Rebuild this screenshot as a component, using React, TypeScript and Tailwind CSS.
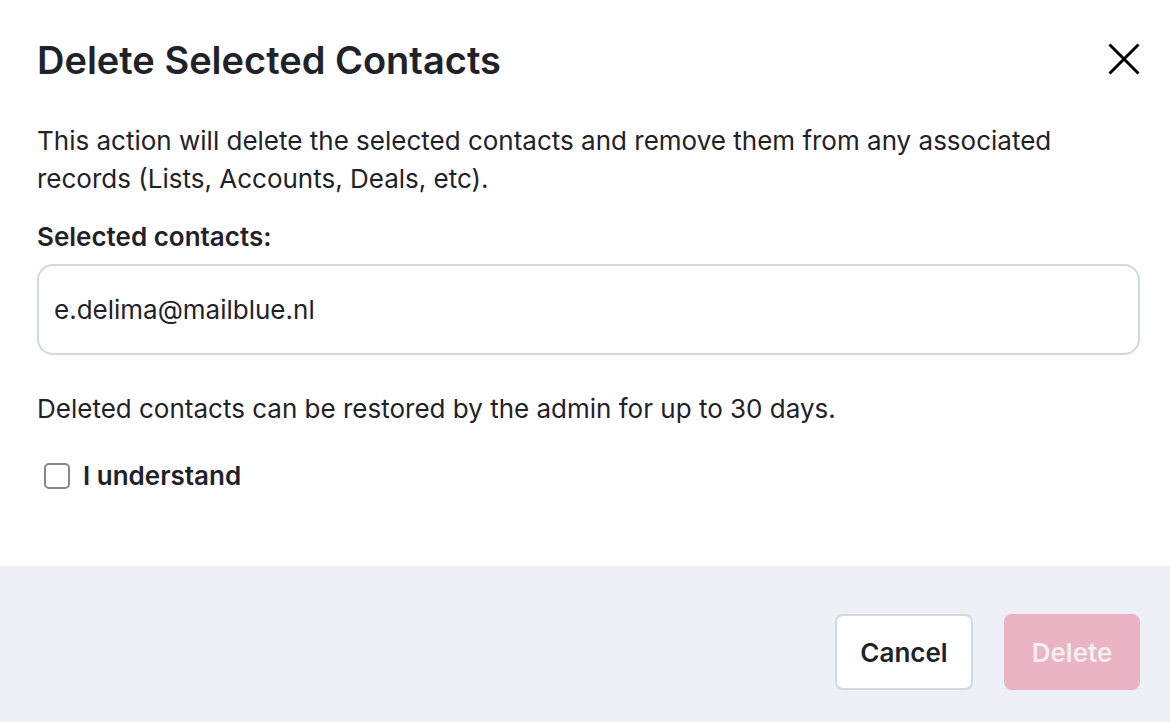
export default function App() {
  return (
    <div
      className="flex h-[722px] w-[1170px] flex-col bg-white text-[#1f2229]"
      style={{ fontFamily: "Inter, 'Noto Sans', sans-serif" }}
    >
      {/* Body */}
      <div className="flex flex-1 flex-col pl-[37px] pr-[30px] pt-[33px]">
        <div className="flex items-start justify-between">
          <h1 className="text-[38px] font-semibold leading-[54px]">Delete Selected Contacts</h1>
          <button className="mt-[10px] text-black">
            <svg width="32" height="32" viewBox="0 0 32 32" fill="none" stroke="currentColor" strokeWidth={3}>
              <path d="M1.5 1.5L30.5 30.5M30.5 1.5L1.5 30.5" />
            </svg>
          </button>
        </div>

        <p className="mt-[35px] text-[26px] leading-[38px]">
          This action will delete the selected contacts and remove them from any associated
          <br />
          records (Lists, Accounts, Deals, etc).
        </p>

        <div className="mt-[20px] text-[26px] font-semibold leading-[38px]">Selected contacts:</div>

        <div className="mt-[8px] flex h-[91px] items-center rounded-[16px] border-2 border-[#d3d6e3] px-[15px] text-[26px]">
          e.delima@mailblue.nl
        </div>

        <p className="mt-[35px] text-[26px] leading-[38px]">
          Deleted contacts can be restored by the admin for up to 30 days.
        </p>

        <label className="mt-[29px] flex items-center gap-[13px] pl-[7px]">
          <span className="h-[26px] w-[26px] rounded-[5px] border-2 border-[#85888f] bg-white" />
          <span className="text-[26px] font-semibold leading-[38px]">I understand</span>
        </label>
      </div>

      {/* Footer */}
      <div className="flex h-[156px] items-start justify-end gap-[31px] bg-[#edf0f7] px-[30px] pt-[48px]">
        <button className="h-[76px] w-[138px] rounded-[8px] border-2 border-[#d3d6e3] bg-white text-[26px] font-semibold">
          Cancel
        </button>
        <button className="h-[76px] w-[136px] rounded-[8px] bg-[#eab4c5] text-[26px] font-semibold text-[#f5eef3]">
          Delete
        </button>
      </div>
    </div>
  );
}
